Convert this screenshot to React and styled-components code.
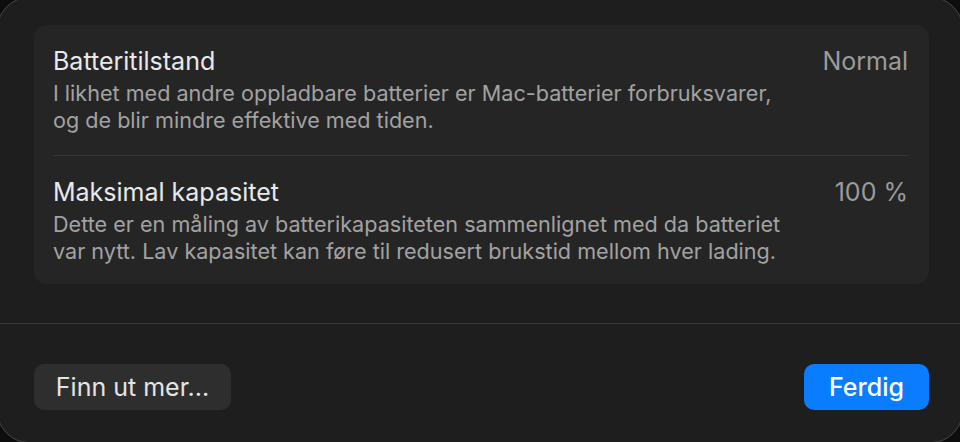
import styled, { createGlobalStyle } from "styled-components";

const GlobalStyle = createGlobalStyle`
  html, body {
    margin: 0;
    padding: 0;
    width: 960px;
    height: 442px;
    overflow: hidden;
    background: #0d0d0d;
  }
  body {
    font-family: Inter, "Noto Sans", "Liberation Sans", sans-serif;
    -webkit-font-smoothing: antialiased;
  }
`;

const rows = [
  {
    title: "Batteritilstand",
    value: "Normal",
    lines: [
      "I likhet med andre oppladbare batterier er Mac-batterier forbruksvarer,",
      "og de blir mindre effektive med tiden.",
    ],
  },
  {
    title: "Maksimal kapasitet",
    value: "100 %",
    lines: [
      "Dette er en måling av batterikapasiteten sammenlignet med da batteriet",
      "var nytt. Lav kapasitet kan føre til redusert brukstid mellom hver lading.",
    ],
  },
];

function App() {
  return (
    <>
      <GlobalStyle />
      <Window>
        <Content>
          <Card>
            {rows.map((row) => (
              <Row key={row.title}>
                <Text>
                  <Title>{row.title}</Title>
                  <Description>
                    {row.lines.map((line) => (
                      <Line key={line}>{line}</Line>
                    ))}
                  </Description>
                </Text>
                <Value>{row.value}</Value>
              </Row>
            ))}
          </Card>
        </Content>
        <Footer>
          <Button $width={197}>Finn ut mer...</Button>
          <Button $width={125} $primary>
            Ferdig
          </Button>
        </Footer>
      </Window>
    </>
  );
}

const Window = styled.div`
  display: flex;
  flex-direction: column;
  box-sizing: border-box;
  margin: -3px -3px 0 -3px;
  width: 966px;
  height: 446px;
  background: #1e1e1e;
  border: 1px solid #474747;
  border-radius: 32px;
  overflow: hidden;
`;

const Content = styled.div`
  padding: 27px 33px 39px 36px;
`;

const Card = styled.div`
  background: #252525;
  border-radius: 13px;
  padding: 0 21px 0 19px;
`;

const Row = styled.div`
  display: flex;
  justify-content: space-between;
  align-items: flex-start;
  padding: 21px 0 21px;

  & + & {
    border-top: 1px solid #353535;
    padding-top: 21px;
    padding-bottom: 19px;
  }
`;

const Text = styled.div`
  display: flex;
  flex-direction: column;
`;

const Title = styled.div`
  font-size: 25px;
  line-height: 30px;
  color: #e9e9e9;
  margin-bottom: 4px;
`;

const Description = styled.div`
  font-size: 21.6px;
  line-height: 27px;
  color: #a2a2a2;
`;

const Line = styled.div`
  white-space: nowrap;
`;

const Value = styled.div`
  font-size: 25px;
  line-height: 30px;
  color: #9b9b9b;
`;

const Footer = styled.div`
  display: flex;
  justify-content: space-between;
  align-items: flex-start;
  flex: 1;
  border-top: 1px solid #383838;
  padding: 40px 33px 0 36px;
`;

const Button = styled.button`
  width: ${(p) => p.$width}px;
  height: 46px;
  border: none;
  border-radius: 10px;
  font-family: inherit;
  font-size: 25px;
  font-weight: ${(p) => (p.$primary ? 500 : 400)};
  color: ${(p) => (p.$primary ? "#ffffff" : "#e4e4e4")};
  background: ${(p) => (p.$primary ? "#0a7cff" : "#2e2e2e")};
  cursor: pointer;
`;

export default App;
